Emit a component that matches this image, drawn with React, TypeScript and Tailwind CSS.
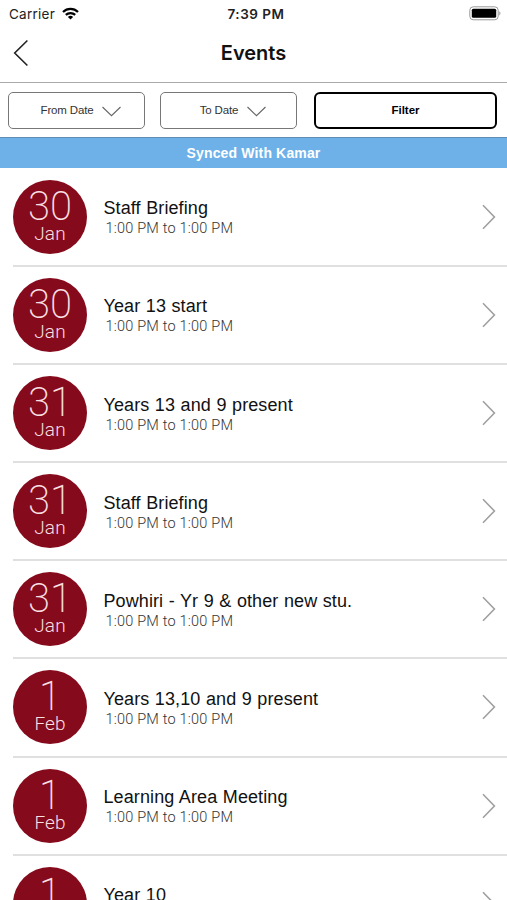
type EventItem = {
  day: string;
  month: string;
  title: string;
};

const EVENTS: EventItem[] = [
  { day: "30", month: "Jan", title: "Staff Briefing" },
  { day: "30", month: "Jan", title: "Year 13 start" },
  { day: "31", month: "Jan", title: "Years 13 and 9 present" },
  { day: "31", month: "Jan", title: "Staff Briefing" },
  { day: "31", month: "Jan", title: "Powhiri - Yr 9 & other new stu." },
  { day: "1", month: "Feb", title: "Years 13,10 and 9 present" },
  { day: "1", month: "Feb", title: "Learning Area Meeting" },
  { day: "1", month: "Feb", title: "Year 10" },
];

function StatusBar() {
  return (
    <div className="grid h-7 shrink-0 grid-cols-3 items-center pr-[6px] pl-[9px] font-['Inter',sans-serif] text-[13.5px] text-[#222]">
      <div className="flex items-center gap-[7px]">
        <span className="tracking-[0.25px]">Carrier</span>
        <svg className="-mt-0.5" width="17" height="13" viewBox="0 0 17 13" fill="none" stroke="#000" strokeWidth="2.2">
          <path d="M1 5C5.2 .9 11.8 .9 16 5" />
          <path d="M3.8 7.9c2.6-2.5 6.8-2.5 9.4 0" />
          <path d="M8.5 12.5 5.9 9.9c1.5-1.4 3.7-1.4 5.2 0z" fill="#000" stroke="none" />
        </svg>
      </div>
      <span className="ml-[2px] text-center font-semibold tracking-[0.5px] whitespace-nowrap">7:39 PM</span>
      <svg className="-mt-0.5 justify-self-end" width="32" height="15" viewBox="0 0 32 15">
        <rect x=".8" y=".8" width="28.4" height="13" rx="3.5" fill="#fff" stroke="#999" />
        <rect x="2.8" y="2.8" width="24.4" height="9" rx="1.5" fill="#000" />
        <path d="M30.4 5.2c1.3.6 1.3 3.6 0 4.2z" fill="#888" />
      </svg>
    </div>
  );
}

function DateButton({ label }: { label: string }) {
  return (
    <button className="flex h-[37px] w-[137px] items-center justify-center gap-[9px] rounded-[5px] border border-[#777] pl-[9px] text-[11.5px] tracking-[-0.15px] text-[#333]">
      <span className="pt-0.5">{label}</span>
      <svg className="mt-0.5" width="19" height="11" viewBox="0 0 19 11" fill="none" stroke="#666" strokeWidth="1.1">
        <path d="M.5 1 9.5 9.7 18.5 1" />
      </svg>
    </button>
  );
}

function EventRow({ day, month, title }: EventItem) {
  return (
    <li className="ml-[13px] flex h-[98.15px] items-center border-b-2 border-[#e0e0e0] pr-[11px]">
      <div className="flex size-[74px] shrink-0 flex-col items-center rounded-full bg-[#850b1c] font-['Roboto',sans-serif] text-[#f8dfe1]">
        <span className="mt-[7px] h-[37px] text-[40px] leading-[40px] font-extralight">{day}</span>
        <span className="text-[19px] leading-[20px] font-light tracking-[0.1px]">{month}</span>
      </div>
      <div className="mt-[3px] ml-[16.5px] flex-1">
        <p className="text-[18px] leading-[21px] tracking-[0.1px] text-[#111] [word-spacing:0.4px]">{title}</p>
        <p className="ml-[2px] font-['Roboto',sans-serif] text-[14.5px] leading-[19px] font-light tracking-[0.2px] text-[#333]">
          1:00 PM to 1:00 PM
        </p>
      </div>
      <svg width="14" height="26" viewBox="0 0 14 26" fill="none" stroke="#a0a0a0" strokeWidth="1.6">
        <path d="M1 1.2 12.4 13 1 24.8" />
      </svg>
    </li>
  );
}

export default function App() {
  return (
    <div className="flex h-[900px] w-[507px] flex-col overflow-hidden bg-white font-['Liberation_Sans',sans-serif] antialiased">
      <StatusBar />
      <header className="grid h-[55px] shrink-0 grid-cols-3 items-center border-b border-[#aaa] px-[13px] pb-1">
        <svg width="16" height="28" viewBox="0 0 16 28" fill="none" stroke="#222" strokeWidth="1.6">
          <path d="M14.4 1.5 1.7 14 14.4 26.5" />
        </svg>
        <h1 className="text-center font-['Inter',sans-serif] text-[20px] font-semibold text-[#111]">Events</h1>
      </header>
      <div className="flex h-[54px] shrink-0 items-center pl-2">
        <DateButton label="From Date" />
        <div className="ml-[15px]">
          <DateButton label="To Date" />
        </div>
        <button className="ml-[17px] h-[37px] w-[183px] rounded-[6px] border-[2.5px] border-black pt-0.5 text-[11.5px] font-bold text-black">
          Filter
        </button>
      </div>
      <div className="flex h-[31px] shrink-0 items-center justify-center border-t border-[#5f8db5] bg-[#6db1e8] pt-px text-[14px] font-bold tracking-[0.15px] text-white">
        Synced With Kamar
      </div>
      <ul className="flex-none pt-[0.7px]">
        {EVENTS.map((event, i) => (
          <EventRow key={i} {...event} />
        ))}
      </ul>
    </div>
  );
}
